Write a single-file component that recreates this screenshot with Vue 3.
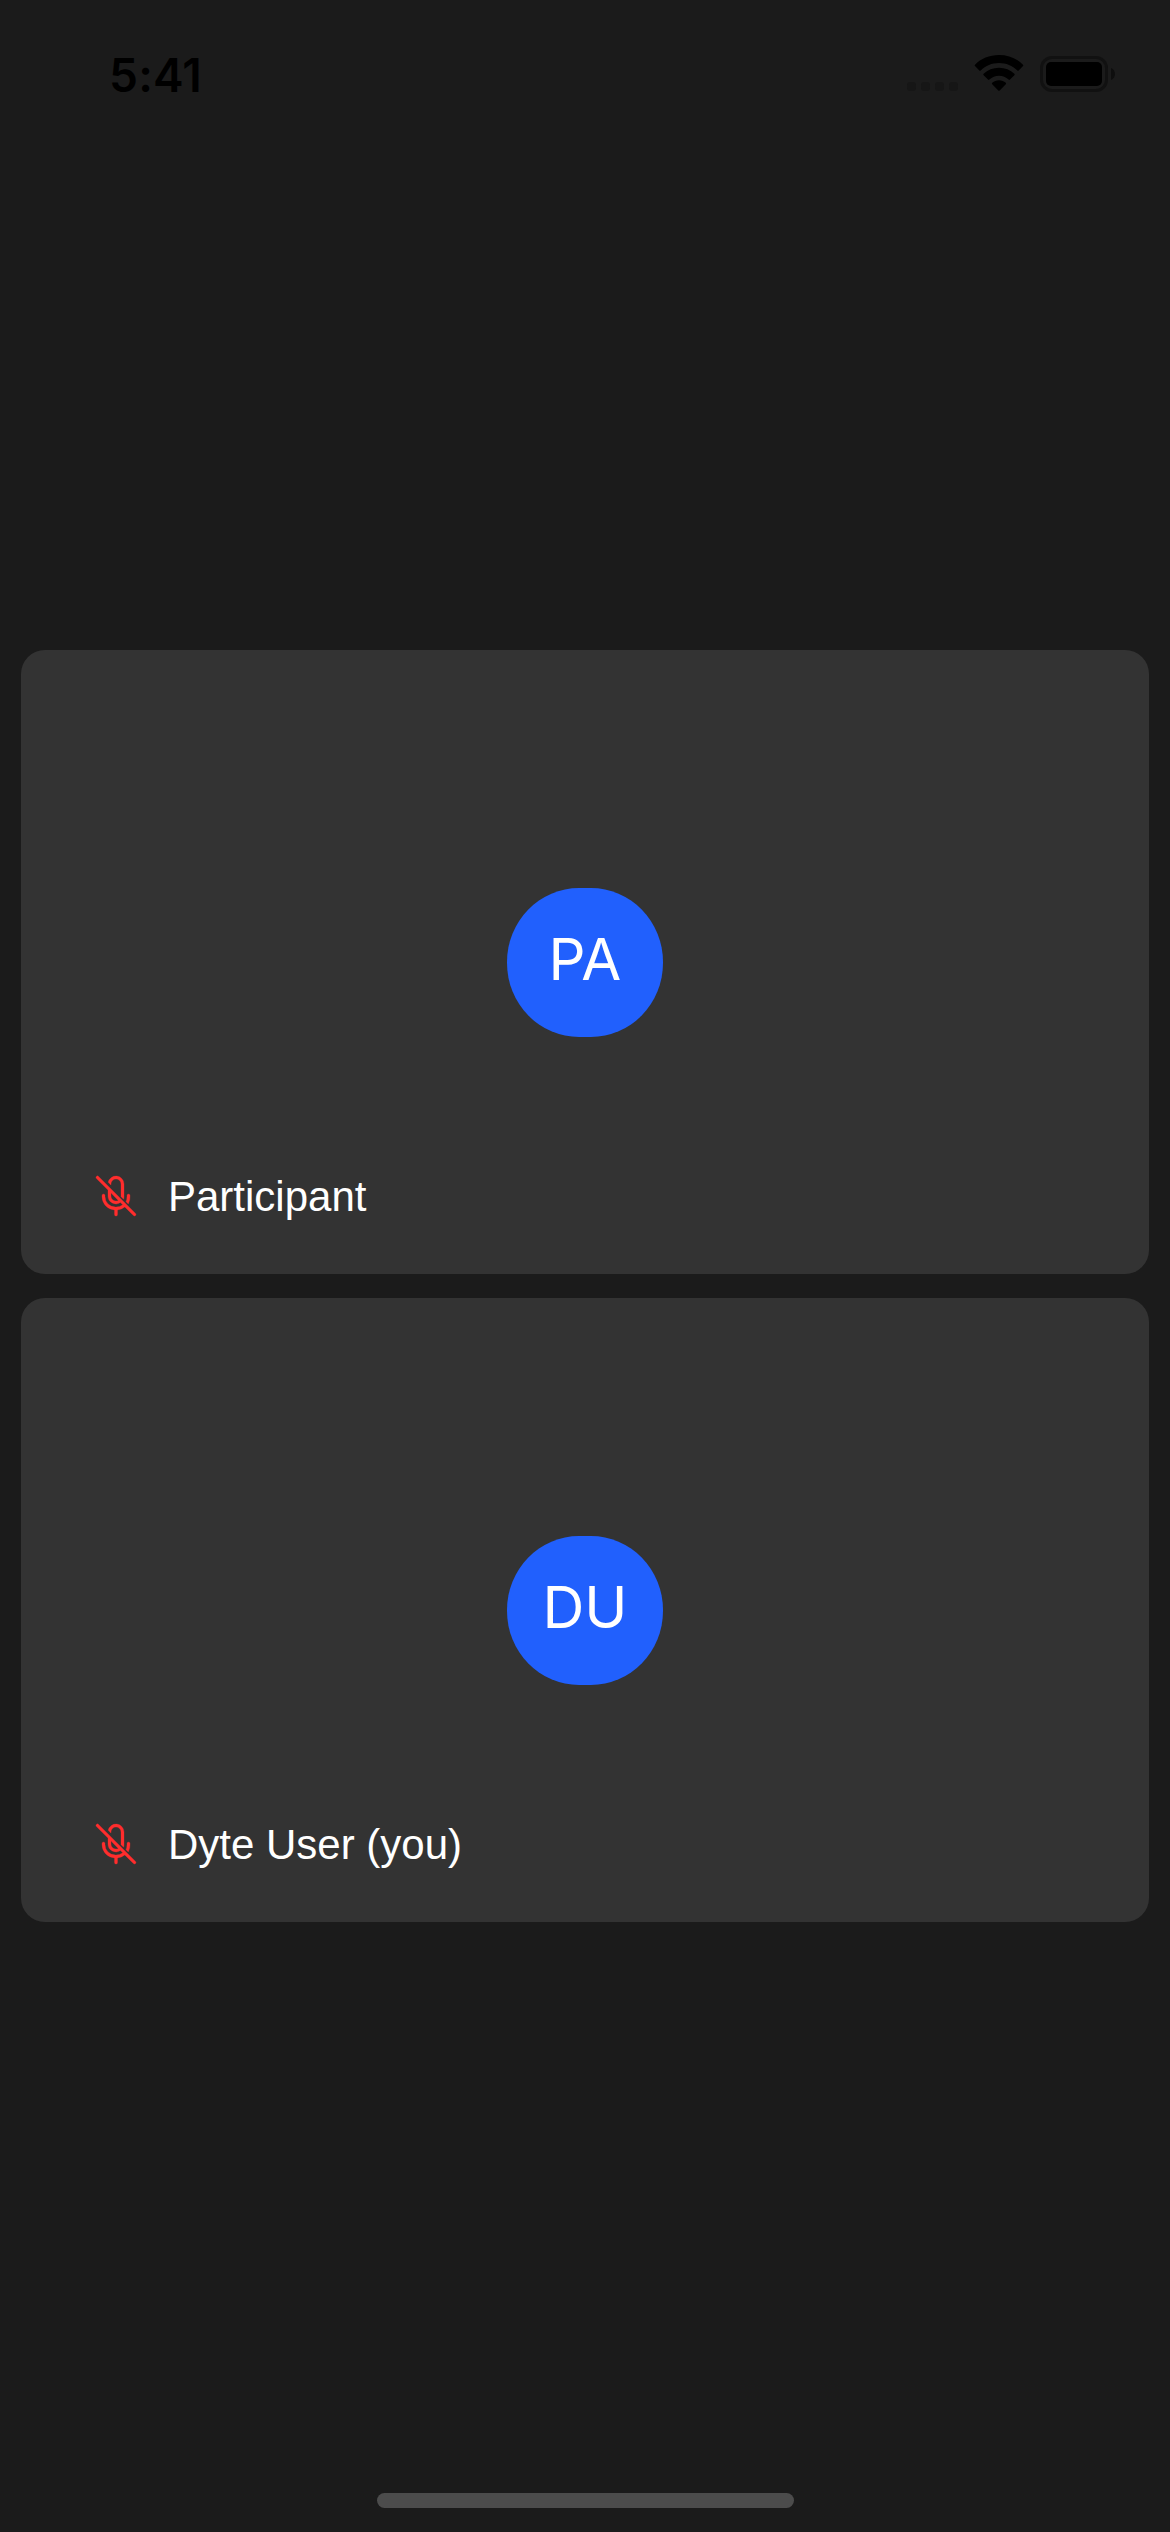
<script setup>
const participants = [
  { id: 1, initials: 'PA', name: 'Participant' },
  { id: 2, initials: 'DU', name: 'Dyte User (you)' },
]
</script>

<template>
  <div class="screen">
    <header class="status">
      <span class="time">5:41</span>
      <div class="indicators">
        <div class="signal"><i v-for="n in 4" :key="n"></i></div>
        <svg class="wifi" width="50" height="37" viewBox="0 0 50 37">
          <path d="M25 0C34.6 0 43.100 3.500 49 9.700q.6.700 0 1.400l-4.300 4.300q-.7.600-1.400 0C38.300 10.700 32.200 8 25 8S11.700 10.700 6.700 15.400q-.7.600-1.400 0L1 11.100q-.6-.7 0-1.400C6.900 3.500 15.400 0 25 0Z" />
          <path d="M25 12.800c6 0 11.300 2.200 15.400 6q.7.700 0 1.400l-4.400 4.400q-.7.600-1.400 0C31.900 22.200 28.700 20.800 25 20.800s-6.900 1.400-9.600 3.800q-.7.600-1.400 0l-4.400-4.400q-.7-.7 0-1.400c4.100-3.800 9.400-6 15.400-6Z" />
          <path d="M25 25.300c2.600 0 4.900.9 6.800 2.500q.7.700 0 1.400l-6.100 6.200q-.7.700-1.400 0l-6.100-6.200q-.7-.7 0-1.400c1.900-1.600 4.200-2.500 6.800-2.500Z" />
        </svg>
        <div class="battery"><div class="charge"></div></div>
        <svg class="nub" width="4" height="12" viewBox="0 0 4 12"><path d="M0 0C5.300 2 5.300 10 0 12Z" /></svg>
      </div>
    </header>

    <main class="grid">
      <section v-for="p in participants" :key="p.id" class="tile">
        <div class="avatar"><span>{{ p.initials }}</span></div>
        <div class="nametag">
          <svg width="48" height="48" viewBox="0 0 24 24">
            <path d="M3.280 2.220a.75.75 0 1 0-1.060 1.060L8 9.060V12a4 4 0 0 0 6.250 3.300l1.090 1.090A5.200 5.200 0 0 1 12 17.500h-.25A5.250 5.250 0 0 1 6.500 12.250v-.5a.75.75 0 0 0-1.500 0v.5a6.750 6.750 0 0 0 6.250 6.730v2.270a.75.75 0 0 0 1.500 0v-2.270a6.720 6.720 0 0 0 3.650-1.530l4.320 4.330a.75.75 0 0 0 1.060-1.060L3.280 2.220Zm9.870 11.990A2.500 2.500 0 0 1 9.500 12v-1.440l3.650 3.650Z" />
            <path d="M14.500 6v6.320l1.320 1.320C15.940 13.200 16 12.800 16 12V6a4 4 0 0 0-7.900-.86l1.400 1.400V6a2.500 2.500 0 0 1 5 0Z" />
            <path d="M17 14.820l1.140 1.140A6.700 6.700 0 0 0 19 12.250v-.5a.75.75 0 0 0-1.500 0v.5c0 .92-.16 1.800-.5 2.570Z" />
          </svg>
          <span>{{ p.name }}</span>
        </div>
      </section>
    </main>

    <footer class="home"><div class="home-bar"></div></footer>
  </div>
</template>

<style>
body {
  background: #1b1b1b;
}
</style>

<style scoped>
.screen {
  width: 1170px;
  height: 2532px;
  display: flex;
  flex-direction: column;
  background: #1b1b1b;
  overflow: hidden;
}
.status {
  height: 650px;
  flex: none;
  box-sizing: border-box;
  padding: 55px 55px 0 109px;
  display: flex;
  justify-content: space-between;
  align-items: flex-start;
  color: #000;
}
.time {
  font: 600 46px/40px Inter, sans-serif;
  letter-spacing: 0.2px;
}
.indicators {
  display: flex;
  align-items: flex-start;
}
.signal {
  display: flex;
  gap: 5px;
  margin: 27px 16px 0 0;
}
.signal i {
  width: 9px;
  height: 9px;
  border-radius: 3px;
  background: #161616;
}
.wifi {
  display: block;
  margin-right: 16px;
}
.battery {
  box-sizing: border-box;
  width: 68px;
  height: 36px;
  margin-top: 1px;
  padding: 3px;
  border: 3px solid #111;
  border-radius: 12px;
}
.charge {
  height: 24px;
  border-radius: 5px;
  background: #000;
}
.nub {
  display: block;
  margin: 13px 0 0 3px;
  fill: #0e0e0e;
}
.grid {
  display: flex;
  flex-direction: column;
  gap: 24px;
  padding: 0 21px;
}
.tile {
  box-sizing: border-box;
  height: 624px;
  padding: 238px 71px 0;
  border-radius: 24px;
  background: #333;
  display: flex;
  flex-direction: column;
}
.avatar {
  width: 156px;
  height: 149px;
  align-self: center;
  display: flex;
  justify-content: center;
  border-radius: 72px / 74px;
  background: #2160fd;
  color: #fff;
  font: 400 58px/142px Inter, sans-serif;
}
.nametag {
  display: flex;
  align-items: center;
  gap: 28px;
  height: 48px;
  margin-top: 135px;
  color: #fff;
  font: 42px/48px "Liberation Sans", Arial, sans-serif;
  white-space: nowrap;
}
.nametag span {
  padding-top: 2px;
}
.nametag svg {
  flex: none;
  fill: #ff2d2d;
  stroke: #ff2d2d;
  stroke-width: 0.15;
}
.home {
  margin-top: auto;
  padding-bottom: 24px;
  display: flex;
  justify-content: center;
}
.home-bar {
  width: 417px;
  height: 15px;
  border-radius: 8px;
  background: #4c4c4c;
}
</style>
